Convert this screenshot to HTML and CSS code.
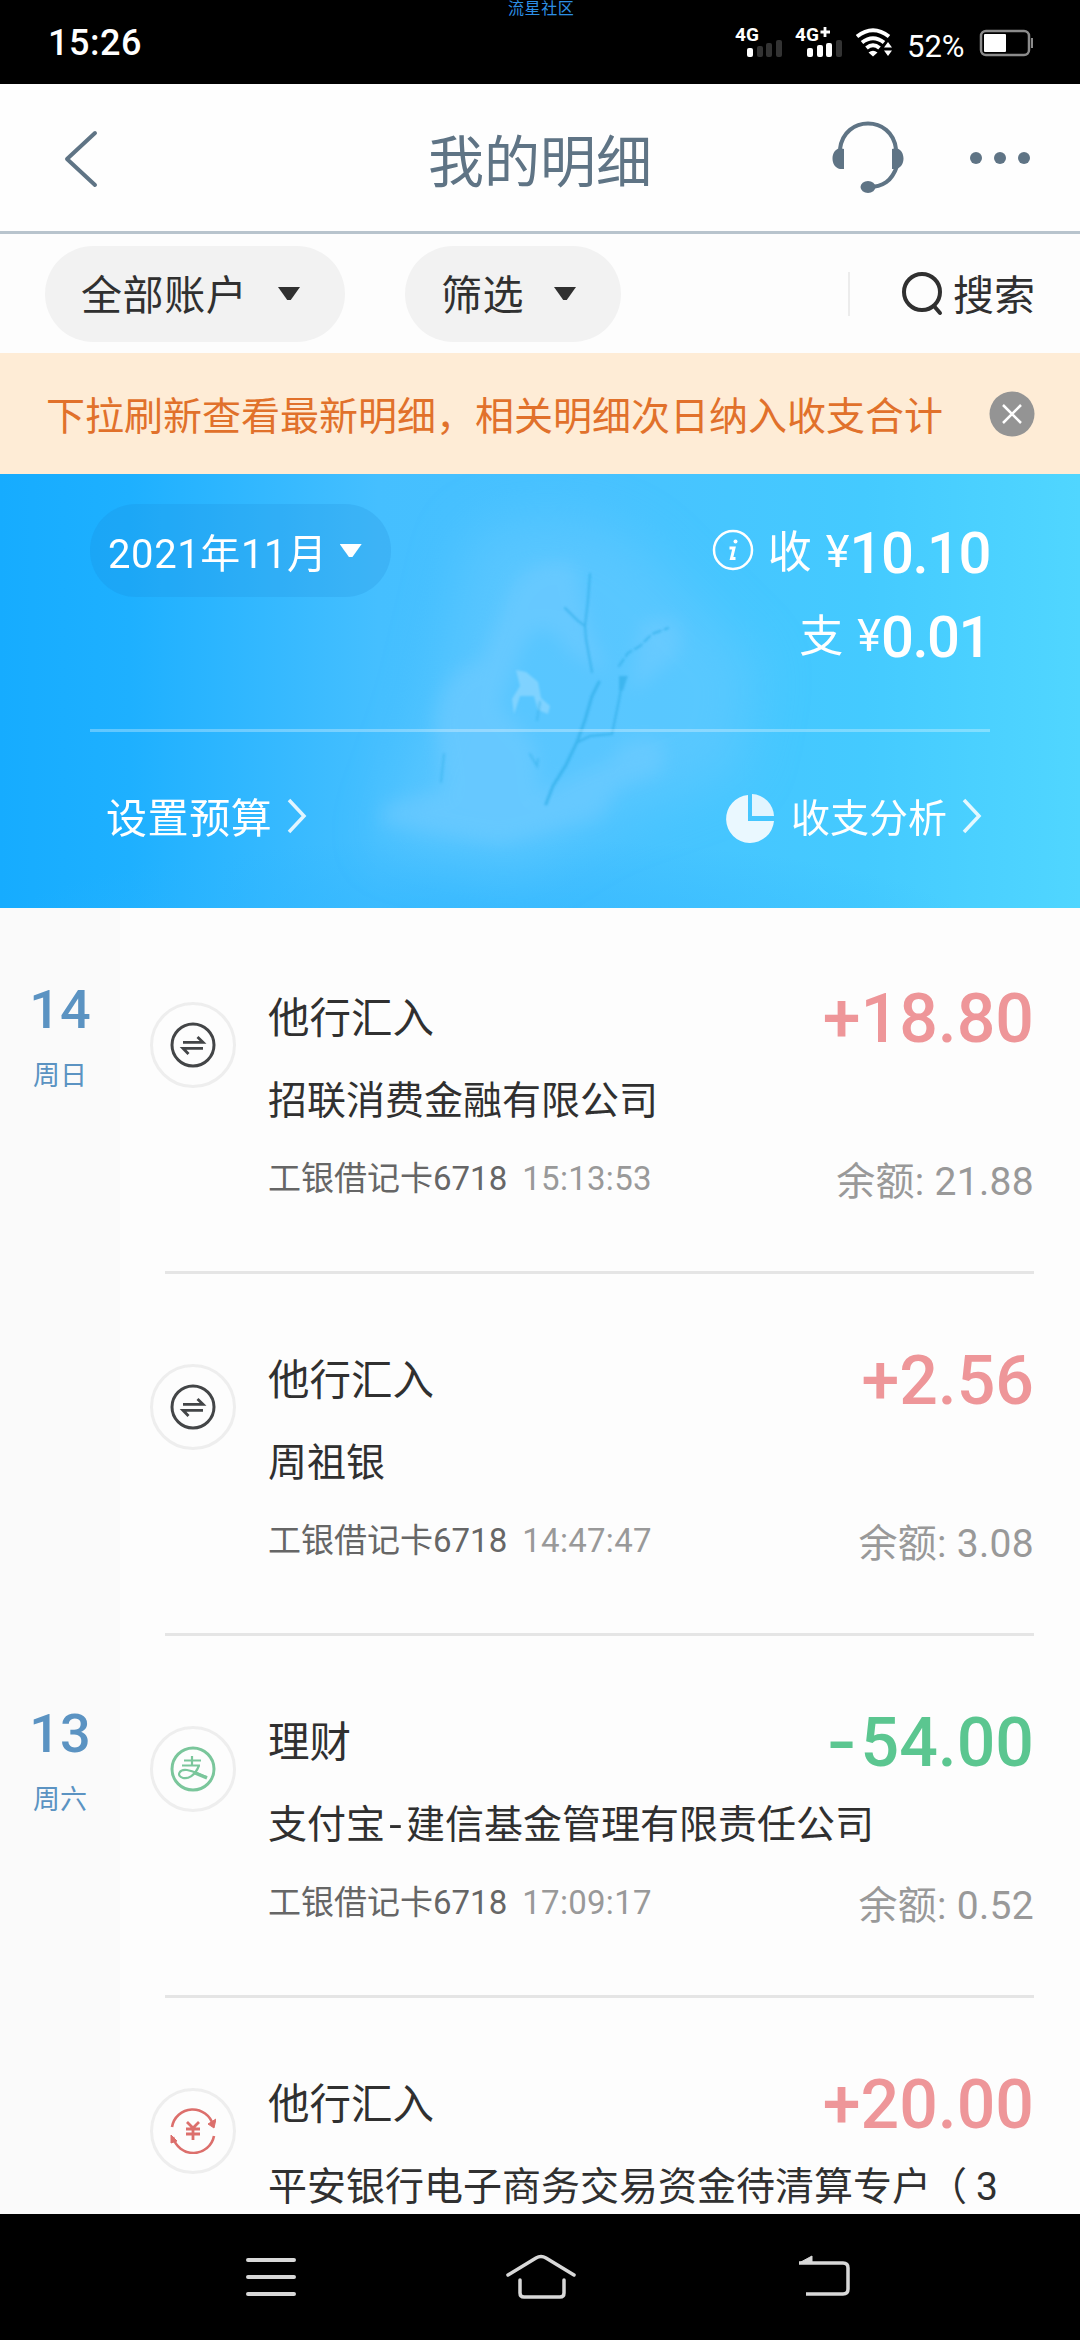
FILE: index.html
```html
<!DOCTYPE html>
<html lang="zh-CN">
<head>
<meta charset="utf-8">
<title>我的明细</title>
<link rel="stylesheet" href="styles.css">
</head>
<body>
<div class="screen">
  <div class="statusbar">
    <span class="watermark">流星社区</span>
    <span class="clock">15:26</span>
    <div class="status-right">
      <svg class="signals" width="168" height="48" viewBox="-4 -10 168 48">
        <g fill="#fff">
          <rect x="12" y="24" width="6" height="9" rx="2"/>
          <rect x="72" y="24" width="6" height="9" rx="2"/><rect x="82" y="21" width="6" height="12" rx="2"/><rect x="91" y="19" width="6" height="14" rx="2"/>
        </g>
        <g fill="#333">
          <rect x="22" y="22" width="6" height="11" rx="2"/><rect x="31" y="19" width="6" height="14" rx="2"/><rect x="41" y="16" width="6" height="17" rx="2"/>
          <rect x="101" y="16" width="6" height="17" rx="2"/>
        </g>
        <text x="0" y="17" class="net">4G</text>
        <text x="60" y="17" class="net">4G</text>
        <path d="M90 3V13M85.500 8H95" stroke="#fff" stroke-width="2.800"/>
        <g fill="none" stroke="#fff" stroke-width="4">
          <path d="M122 12.500Q138 0 154 12.500"/><path d="M127 18.500Q138 10 149 18.500"/><path d="M131.500 24Q138 18.500 144.500 24"/>
        </g>
        <path d="M133.500 28.500Q138 25 142.500 28.500L138 32.500ZM149 23.500L153 18L157 23.500ZM149 26.500L153 32L157 26.500Z" fill="#fff"/>
      </svg>
      <span class="percent">52%</span>
      <svg class="battery" width="56" height="30" viewBox="0 0 56 30"><rect x="2" y="2" width="48" height="24" rx="5" fill="none" stroke="#8b8b8b" stroke-width="2.500"/><rect x="5" y="5" width="22" height="18" rx="1" fill="#fff"/><rect x="52" y="9" width="2" height="10" fill="#8b8b8b"/></svg>
    </div>
  </div>

  <header class="header">
    <svg class="back" width="40" height="64" viewBox="0 0 40 64"><path d="M35 7L7 33L35 59" fill="none" stroke="#5f7485" stroke-width="4" stroke-linecap="round" stroke-linejoin="round"/></svg>
    <h1 class="title">我的明细</h1>
    <div class="header-actions">
      <svg width="74" height="74" viewBox="0 0 74 74">
        <path d="M9 28C13 -6 61 -6 65 28M66 45C61 60 52 66 37 66" fill="none" stroke="#5f7485" stroke-width="4"/>
        <path d="M13 28V48H9C-1 46 -1 29 9 27ZM61 28V48H65C75 46 75 29 65 27Z" fill="#5f7485"/>
        <ellipse cx="37" cy="66" rx="7.500" ry="6" fill="#5f7485"/>
      </svg>
      <svg width="60" height="12" viewBox="0 0 60 12" fill="#5f7485"><circle cx="6" cy="6" r="6"/><circle cx="30" cy="6" r="6"/><circle cx="54" cy="6" r="6"/></svg>
    </div>
  </header>

  <div class="filters">
    <div class="pill pill-account"><span>全部账户</span><i class="caret"></i></div>
    <div class="pill pill-filter"><span>筛选</span><i class="caret"></i></div>
    <div class="search">
      <svg width="44" height="46" viewBox="0 0 44 46"><circle cx="21" cy="21" r="18" fill="none" stroke="#303030" stroke-width="4"/><path d="M33 35L39 42" stroke="#303030" stroke-width="4" stroke-linecap="round"/></svg>
      <span>搜索</span>
    </div>
  </div>

  <div class="notice">
    <span class="notice-text">下拉刷新查看最新明细，相关明细次日纳入收支合计</span>
    <svg width="46" height="46" viewBox="0 0 46 46"><circle cx="23" cy="23" r="22.500" fill="#949494"/><path d="M14 14L32 32M32 14L14 32" stroke="#fff" stroke-width="2.500"/></svg>
  </div>

  <section class="banner">
    <svg class="scene" width="1080" height="434" viewBox="0 0 1080 434">
      <defs>
        <linearGradient id="sky" x1="0" y1="0" x2="1" y2="0"><stop offset="0" stop-color="#16acff"/><stop offset=".12" stop-color="#1eb0ff"/><stop offset=".35" stop-color="#45bfff"/><stop offset=".55" stop-color="#48c2ff"/><stop offset=".8" stop-color="#44caff"/><stop offset="1" stop-color="#50d6ff"/></linearGradient>
        <radialGradient id="base" cx=".45" cy="1.100" r=".45"><stop offset="0" stop-color="#2cb4ff" stop-opacity=".6"/><stop offset="1" stop-color="#2cb4ff" stop-opacity="0"/></radialGradient>
        <filter id="haze" x="-50%" y="-50%" width="200%" height="200%"><feGaussianBlur stdDeviation="26"/></filter>
        <filter id="soft" x="-50%" y="-50%" width="200%" height="200%"><feGaussianBlur stdDeviation="9"/></filter>
        <filter id="thin"><feGaussianBlur stdDeviation=".8"/></filter>
      </defs>
      <rect width="1080" height="434" fill="url(#sky)"/>
      <rect y="234" width="1080" height="200" fill="url(#base)"/>
      <path d="M470 60Q560 20 640 70L760 190L740 300L600 350L520 400L380 370L430 230Z" fill="#6bcbff" opacity=".5" filter="url(#haze)"/>
      <g fill="#7acdff" opacity=".42" filter="url(#soft)">
        <path d="M435 250Q440 195 480 188L505 130Q520 80 575 90L590 160L610 200L570 180Q540 130 520 180L500 230L535 270L540 320L580 300L640 275L600 345L500 370L380 350L385 330L445 315Z"/>
        <path d="M640 150Q690 130 680 180L630 220Z"/>
        <path d="M620 270Q680 250 660 300L600 320Z"/>
      </g>
      <path d="M516 196L526 198L538 208L541 224L550 232L548 240L538 236L534 222L520 222L514 240L512 225L520 212Z" fill="#9adbff" opacity=".6" filter="url(#thin)"/>
      <g fill="none" stroke="#35b0ea" stroke-linecap="round" stroke-width="2" opacity=".75" filter="url(#thin)">
        <path d="M546 330L553 312L566 291L577 268L585 246L592 222L599 208" stroke-width="3"/>
        <path d="M592 198L586 165L585 152L577 146L565 134M585 152L588 126L590 100"/>
        <path d="M619 192L628 179L640 172L652 160L668 154" stroke-dasharray="8 4"/>
        <path d="M623 204L619 226L612 260L590 262L578 268"/>
        <path d="M537 246L540 228M530 280L537 292L538 285M441 308L444 280" opacity=".7"/>
        <path d="M621 204H625L621 216Z" stroke-width="4"/>
      </g>
    </svg>
    <div class="summary">
      <div class="month"><span>2021年11月</span><i class="caret caret-light"></i></div>
      <div class="totals">
        <div class="total">
          <svg class="info" width="42" height="42" viewBox="0 0 42 42"><circle cx="21" cy="21" r="19" fill="none" stroke="#fff" stroke-width="2.500"/><circle cx="23.500" cy="12.500" r="2" fill="#fff"/><path d="M17.500 19H22L19.500 29.500H23.500" fill="none" stroke="#fff" stroke-width="3"/></svg>
          <span class="kind">收</span><span class="yen">¥</span><b>10.10</b>
        </div>
        <div class="total second"><span class="kind">支</span><span class="yen">¥</span><b>0.01</b></div>
      </div>
    </div>
    <div class="links">
      <div class="link"><span class="budget">设置预算</span><svg width="22" height="36" viewBox="0 0 22 36"><path d="M3 2L18 18L3 34" fill="none" stroke="#fff" stroke-opacity=".85" stroke-width="3.500"/></svg></div>
      <div class="link">
        <svg class="pie" width="50" height="50" viewBox="0 0 50 50"><path d="M23 1A24 24 0 1 0 49 27H23Z" fill="#eaf8ff"/><path d="M27 0A23 23 0 0 1 49 22H27Z" fill="#e2f5ff"/></svg>
        <span class="analysis">收支分析</span><svg width="22" height="36" viewBox="0 0 22 36"><path d="M3 2L18 18L3 34" fill="none" stroke="#fff" stroke-opacity=".85" stroke-width="3.500"/></svg>
      </div>
    </div>
  </section>

  <main class="list">
    <section class="day">
      <div class="date"><span class="num">14</span><span class="week">周日</span></div>
      <div class="entries">
        <article class="entry">
          <div class="badge"><svg width="46" height="46" viewBox="0 0 46 46" fill="none" stroke="#434547"><circle cx="23" cy="23" r="21" stroke-width="3"/><path d="M13 20.300H33L27.500 15M33 26.300H13L18.500 32" stroke-width="2.800"/></svg></div>
          <div class="detail"><h2>他行汇入</h2><p class="party">招联消费金融有限公司</p><p class="card">工银借记卡6718<time>15:13:53</time></p></div>
          <div class="money"><strong class="in">+18.80</strong><span>余额: 21.88</span></div>
        </article>
        <article class="entry">
          <div class="badge"><svg width="46" height="46" viewBox="0 0 46 46" fill="none" stroke="#434547"><circle cx="23" cy="23" r="21" stroke-width="3"/><path d="M13 20.300H33L27.500 15M33 26.300H13L18.500 32" stroke-width="2.800"/></svg></div>
          <div class="detail"><h2>他行汇入</h2><p class="party">周祖银</p><p class="card">工银借记卡6718<time>14:47:47</time></p></div>
          <div class="money"><strong class="in">+2.56</strong><span>余额: 3.08</span></div>
        </article>
      </div>
    </section>
    <section class="day">
      <div class="date"><span class="num">13</span><span class="week">周六</span></div>
      <div class="entries">
        <article class="entry">
          <div class="badge"><svg width="46" height="46" viewBox="0 0 46 46" fill="none" stroke="#7ac69b"><circle cx="23" cy="23" r="21" stroke-width="3"/><path d="M14 14.500H31M12 19.500H30M22 10V19.500M29 19.500C25 30 18 33 13 32C6 30 9 23 17 24C25 25 29 29 37 31" stroke-width="2.200"/><path d="M25 27L37 32" stroke-width="3.500"/></svg></div>
          <div class="detail"><h2>理财</h2><p class="party">支付宝<span class="dash">-</span>建信基金管理有限责任公司</p><p class="card">工银借记卡6718<time>17:09:17</time></p></div>
          <div class="money"><strong class="out"><span class="minus">-</span>54.00</strong><span>余额: 0.52</span></div>
        </article>
        <article class="entry">
          <div class="badge"><svg width="46" height="46" viewBox="0 0 46 46" fill="none" stroke="#dc6f6c"><path d="M2 19A21 21 0 0 1 43 17M44 28A21 21 0 0 1 3 29" stroke-width="2.600"/><path d="M46 11L44 20L38 16ZM1 27L1 35L7 33Z" fill="#dc6f6c" stroke-width="1"/><path d="M17 14L23 20L29 14M16 21H30M16 26H30M23 20V32" stroke-width="2.800"/></svg></div>
          <div class="detail"><h2>他行汇入</h2><p class="party">平安银行电子商务交易资金待清算专户<span class="paren">（</span>3</p></div>
          <div class="money"><strong class="in">+20.00</strong></div>
        </article>
      </div>
    </section>
  </main>

  <nav class="navbar">
    <svg width="50" height="40" viewBox="0 0 50 40" stroke="#d8d8d8" stroke-width="4" stroke-linecap="round"><path d="M2 3H48M2 20H48M2 37H48"/></svg>
    <svg width="70" height="46" viewBox="0 0 70 46" fill="none" stroke="#d8d8d8" stroke-width="3.500" stroke-linecap="round" stroke-linejoin="round"><path d="M2 21L30 4Q35 1 40 4L68 21M14 26V39Q14 43 18 43H54Q58 43 58 39V26"/></svg>
    <svg width="54" height="44" viewBox="0 0 54 44" fill="none" stroke="#d8d8d8" stroke-width="3.500" stroke-linejoin="round"><path d="M2 8H46Q51 8 51 13V34Q51 39 46 39H9" /><path d="M15 1V8H2Z" fill="#d8d8d8" stroke-width="1"/></svg>
  </nav>
</div>
</body>
</html>
```

FILE: styles.css
```css
* { box-sizing: border-box; margin: 0; padding: 0; }
body { width: 1080px; background: #fdfdfd; font-family: Roboto, "Noto Sans CJK SC", sans-serif; color: #303030; }
svg { display: block; flex: none; }
.screen { width: 1080px; height: 2340px; display: flex; flex-direction: column; overflow: hidden; white-space: nowrap; }

.statusbar { position: relative; flex: none; height: 84px; background: #000; color: #fff; display: flex; justify-content: space-between; padding: 0 45px 0 48px; }
.watermark { position: absolute; top: 0; left: 508px; font-size: 16px; line-height: 17px; letter-spacing: .6px; color: #2d8fe4; }
.clock { font-size: 36px; line-height: 87px; letter-spacing: .5px; font-weight: 500; }
.status-right { display: flex; align-items: flex-start; padding-top: 24px; }
.signals { margin-top: -10px; overflow: visible; }
.net { font: 700 19px Roboto, sans-serif; fill: #fff; }
.percent { width: 62px; font-size: 31px; line-height: 45px; margin: 0 10px 0 8px; }
.battery { margin-top: 5px; }

.header { flex: none; height: 150px; border-bottom: 3px solid #b8c4cd; background: #fefefe; display: grid; grid-template-columns: 1fr auto 1fr; align-items: center; padding: 0 50px 0 60px; }
.title { font-size: 56px; line-height: 80px; font-weight: 400; color: #5f7485; padding-top: 10px; margin-left: -10px; }
.header-actions { display: flex; align-items: center; justify-content: flex-end; gap: 65px; }

.filters { flex: none; height: 119px; display: flex; align-items: center; padding: 0 45px; }
.pill { height: 96px; border-radius: 48px; background: #f2f2f2; display: flex; align-items: center; justify-content: space-between; padding: 0 45px 0 36px; font-size: 41px; line-height: 60px; letter-spacing: .6px; }
.pill span, .search span { padding-top: 5px; }
.pill-account { width: 300px; }
.pill-filter { width: 216px; margin-left: 60px; }
.caret { width: 22px; height: 13px; background: #303030; clip-path: polygon(0 0, 100% 0, 58% 100%, 42% 100%); }
.search { margin-left: auto; height: 44px; border-left: 2px solid #ececec; padding-left: 51px; display: flex; align-items: center; gap: 8px; font-size: 41px; line-height: 60px; }

.notice { flex: none; height: 121px; background: #feecd6; display: flex; align-items: center; justify-content: space-between; padding: 0 45px 0 46px; }
.notice-text { font-size: 39px; line-height: 60px; color: #e1712b; padding-top: 6px; }

.banner { position: relative; flex: none; height: 434px; padding: 0 90px; color: #fff; }
.scene { position: absolute; inset: 0; }
.summary { position: relative; height: 258px; border-bottom: 3px solid rgba(255,255,255,.3); padding-top: 30px; display: flex; justify-content: space-between; align-items: flex-start; }
.month { width: 301px; height: 93px; border-radius: 46px; background: rgba(25,125,200,.17); display: flex; align-items: center; gap: 12px; padding-left: 18px; font-size: 40px; letter-spacing: .6px; }
.caret-light { background: #fff; }
.totals { padding-top: 7px; }
.total { height: 84px; display: flex; align-items: center; justify-content: flex-end; }
.info { margin-right: 14px; margin-top: -6px; }
.kind { font-size: 44px; margin-right: 14px; margin-top: -8px; }
.yen { font-size: 45px; margin-top: -3px; }
.total b { font-size: 58px; font-weight: 500; letter-spacing: -1.500px; }
.links { position: relative; height: 173px; display: flex; align-items: center; justify-content: space-between; padding: 0 7px 0 16px; font-size: 41px; line-height: 60px; }
.link { display: flex; align-items: center; gap: 14px; }
.link svg { margin-top: -5px; }
.link .pie { margin-top: 0; margin-right: 2px; }
.budget { letter-spacing: .6px; }
.analysis { font-size: 39px; }

.list { height: 1306px; overflow: hidden; flex: none; }
.day { display: grid; grid-template-columns: 120px 1fr; }
.date { background: #fafafa; display: flex; flex-direction: column; align-items: center; color: #5b93c2; }
.num { font-size: 54px; line-height: 60px; font-weight: 500; margin-top: 72px; }
.week { font-size: 27px; line-height: 40px; margin-top: 16px; }
.entries { padding: 0 46px 0 45px; }
.entry { position: relative; height: 362px; display: flex; padding-top: 74px; }
.entry::after { content: ""; position: absolute; left: 0; right: 0; bottom: -4px; height: 3px; background: #e5e5e5; }
.badge { width: 86px; height: 86px; margin: 20px 0 0 -15px; border: 3px solid #eee; border-radius: 50%; display: flex; align-items: center; justify-content: center; flex: none; }
.detail { margin-left: 32px; }
.detail h2 { font-size: 41.500px; line-height: 60px; font-weight: 400; margin-top: 7px; }
.party { font-size: 39px; line-height: 58px; margin-top: 23px; }
.dash { display: inline-block; width: 21px; text-align: center; transform: scaleX(1.150); }
.paren { margin: 0 9px 0 -3px; }
.card { font-size: 33px; line-height: 48px; margin-top: 25px; color: #666; }
.card time { color: #999; margin-left: 15px; letter-spacing: .3px; }
.money { margin-left: auto; width: 0; display: flex; flex-direction: column; align-items: flex-end; }
.money strong { font-size: 68px; line-height: 80px; font-weight: 500; margin-top: -3px; }
.in { color: #ee9699; }
.out { color: #5bc690; display: flex; }
.minus { display: inline-block; transform: scaleX(1.250); transform-origin: right; margin-right: 4px; letter-spacing: 0; }
.money > span { font-size: 39px; line-height: 56px; letter-spacing: .3px; color: #999; margin-top: 95px; }

.navbar { flex: none; height: 126px; background: #000; display: grid; grid-template-columns: 270px 270px 296px; align-items: center; justify-items: center; padding-left: 136px; }
```
